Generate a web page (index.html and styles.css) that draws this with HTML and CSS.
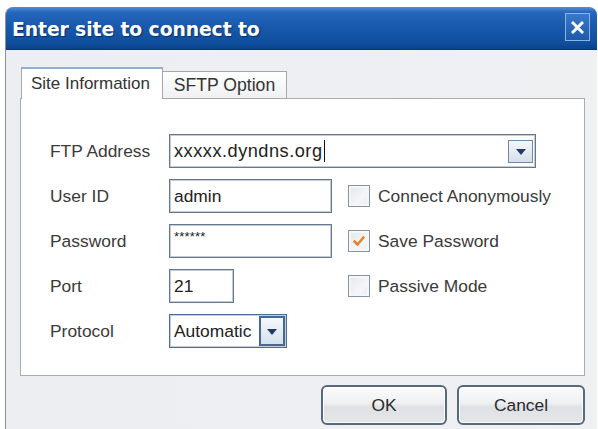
FILE: index.html
```html
<!DOCTYPE html>
<html>
<head>
<meta charset="utf-8">
<link rel="stylesheet" href="styles.css">
</head>
<body>
<div class="window">
  <div class="titlebar">
    <span class="title">Enter site to connect to</span>
    <span class="close"><svg width="13" height="13" viewBox="0 0 13 13"><path d="M2 2 L11 11 M11 2 L2 11" stroke="#ffffff" stroke-width="3" stroke-linecap="square"/></svg></span>
  </div>
  <div class="content">
    <div class="tabs">
      <div class="tab active">Site Information</div>
      <div class="tab">SFTP Option</div>
    </div>
    <div class="panel">
      <div class="form">
        <div class="label">FTP Address</div>
        <div class="field wide">
          <div class="input combo"><span class="val addr">xxxxx.dyndns.org</span><span class="caret"></span><span class="drop"><span class="tri"></span></span></div>
        </div>

        <div class="label">User ID</div>
        <div class="field"><div class="input w163"><span class="val">admin</span></div></div>
        <label class="check"><span class="box"></span><span>Connect Anonymously</span></label>

        <div class="label">Password</div>
        <div class="field"><div class="input w163"><span class="val pw">******</span></div></div>
        <label class="check"><span class="box checked"><svg width="14" height="14" viewBox="0 0 14 14"><path d="M2.5 7.5 L5.5 10.5 L11.5 3.5" fill="none" stroke="#e4832c" stroke-width="2.6" stroke-linecap="round" stroke-linejoin="round"/></svg></span><span>Save Password</span></label>

        <div class="label">Port</div>
        <div class="field"><div class="input w65"><span class="val">21</span></div></div>
        <label class="check"><span class="box"></span><span>Passive Mode</span></label>

        <div class="label">Protocol</div>
        <div class="field"><div class="input select"><span class="val">Automatic</span><span class="sbtn"><span class="tri"></span></span></div></div>
      </div>
    </div>
    <div class="buttons">
      <button class="btn ok">OK</button>
      <button class="btn cancel">Cancel</button>
    </div>
  </div>
</div>
</body>
</html>
```

FILE: styles.css
```css
* { box-sizing: border-box; }
html, body { margin: 0; padding: 0; background: #ffffff; }
body {
  font-family: "Liberation Sans", Arial, sans-serif;
  font-size: 17.4px;
  color: #333;
  padding-top: 7px;
  height: 429px;
  overflow: hidden;
}
.window {
  margin-left: 5px;
  width: 592px;
  height: 422px;
  border-left: 1px solid #8c9197;
  border-radius: 8px 8px 0 0;
  overflow: hidden;
  background: #eceef1;
  display: flex;
  flex-direction: column;
}
.titlebar {
  height: 43px;
  flex: none;
  background: linear-gradient(#5690d4 0, #2467bd 12%, #1857ab 50%, #104e9e 85%, #0b428b 100%);
  border-bottom: 1px solid #0a3772;
  display: flex;
  align-items: center;
  justify-content: space-between;
  padding: 3px 7px 0 6px;
}
.title {
  font-family: "DejaVu Sans", Verdana, sans-serif;
  font-weight: bold;
  font-size: 18.8px;
  color: #ffffff;
  letter-spacing: -0.1px;
  text-shadow: 1px 1px 1px rgba(0, 20, 60, 0.6);
}
.close {
  width: 25px;
  height: 28px;
  margin-top: -5px;
  border: 1px solid #8db3e4;
  background: linear-gradient(#3a78c9, #1d5aad);
  display: flex;
  align-items: center;
  justify-content: center;
}
.content {
  flex: 1;
  padding: 17px 12px 0 14px;
  background: linear-gradient(90deg, #eceef1, #eef0f2);
}
.tabs {
  display: flex;
  align-items: flex-end;
  margin-left: 1px;
  margin-bottom: -1px;
  position: relative;
  z-index: 1;
}
.tab {
  height: 28px;
  width: 124px;
  border: 1px solid #a4a8ad;
  border-left: none;
  background: linear-gradient(#ffffff, #eef0f2);
  display: flex;
  align-items: center;
  justify-content: center;
  color: #333;
  padding-top: 1px;
  font-size: 17.6px;
}
.tab.active {
  width: 142px;
  height: 32px;
  border: 1px solid #a4a8ad;
  border-top: 2px solid #8fb0d6;
  border-bottom: none;
  background: #ffffff;
  padding-top: 0;
  padding-right: 3px;
  font-size: 17px;
}
.panel {
  width: 565px;
  height: 278px;
  background: #ffffff;
  border: 1px solid #a8acb1;
  padding: 35px 0 0 29px;
}
.form {
  display: grid;
  grid-template-columns: 119px 179px auto;
  grid-auto-rows: 34px;
  row-gap: 11px;
  align-items: center;
}
.label { color: #3a3a3a; }
.field { height: 34px; display: flex; }
.field.wide { grid-column: 2 / 4; }
.input {
  height: 34px;
  border: 1px solid #66798c;
  box-shadow: inset 0 0 0 1px #c3ccd6;
  background: #ffffff;
  display: flex;
  align-items: center;
  padding-left: 4px;
  color: #222;
}
.combo { width: 367px; }
.w163 { width: 163px; }
.w65 { width: 65px; }
.val { white-space: nowrap; }
.addr { font-size: 18.2px; letter-spacing: 0.5px; }
.pw { font-size: 13px; align-self: flex-start; padding-top: 4px; letter-spacing: 0.2px; }
.caret {
  width: 1px;
  height: 22px;
  background: #111;
  margin-left: 1px;
}
.drop {
  margin-left: auto;
  margin-right: 2px;
  width: 25px;
  height: 23px;
  border: 1px solid #7088a3;
  background: linear-gradient(#f4f7fa, #d6e0ea);
  display: flex;
  align-items: center;
  justify-content: center;
}
.tri {
  width: 0;
  height: 0;
  border-left: 5px solid transparent;
  border-right: 5px solid transparent;
  border-top: 6px solid #1d3d68;
  margin-top: 1px;
}
.select {
  width: 118px;
  border: 1px solid #4d6f96;
  padding-right: 1px;
}
.sbtn {
  margin-left: auto;
  width: 26px;
  height: 30px;
  border: 2px solid #3f6a9a;
  background: linear-gradient(#f6f8fb, #d7e1eb);
  display: flex;
  align-items: center;
  justify-content: center;
}
.check {
  display: flex;
  align-items: center;
  gap: 8px;
  color: #3a3a3a;
}
.box {
  width: 22px;
  height: 22px;
  flex: none;
  border: 1px solid #8794a2;
  background: linear-gradient(135deg, #e2e6ea, #f4f6f8 60%, #e8ecef);
  box-shadow: inset 0 0 0 2px #f5f6f7;
  display: flex;
  align-items: center;
  justify-content: center;
}
.buttons {
  display: flex;
  justify-content: flex-end;
  gap: 10px;
  padding-top: 9px;
}
.btn {
  height: 40px;
  border: 2px solid #56697d;
  border-radius: 6px;
  background: linear-gradient(#fbfbfc 0, #eef0f2 45%, #dfe2e5 55%, #e4e6e9 100%);
  font-family: "Liberation Sans", Arial, sans-serif;
  font-size: 17.4px;
  color: #2a2a2a;
  box-shadow: inset 0 0 0 1px #ffffff;
  padding: 0;
}
.ok { width: 126px; }
.cancel { width: 128px; }
```
